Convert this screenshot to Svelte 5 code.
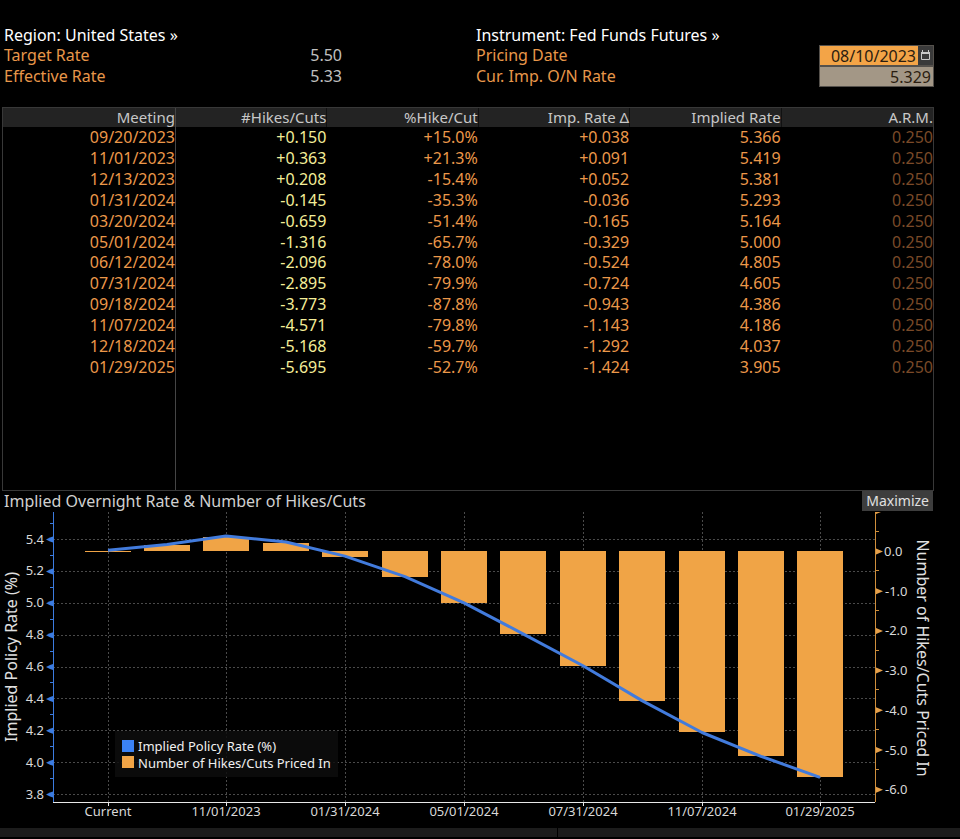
<script>
  const columns = ['Meeting', '#Hikes/Cuts', '%Hike/Cut', 'Imp. Rate Δ', 'Implied Rate', 'A.R.M.'];

  const meetings = [
    ['09/20/2023', '+0.150', '+15.0%', '+0.038', '5.366', '0.250'],
    ['11/01/2023', '+0.363', '+21.3%', '+0.091', '5.419', '0.250'],
    ['12/13/2023', '+0.208', '-15.4%', '+0.052', '5.381', '0.250'],
    ['01/31/2024', '-0.145', '-35.3%', '-0.036', '5.293', '0.250'],
    ['03/20/2024', '-0.659', '-51.4%', '-0.165', '5.164', '0.250'],
    ['05/01/2024', '-1.316', '-65.7%', '-0.329', '5.000', '0.250'],
    ['06/12/2024', '-2.096', '-78.0%', '-0.524', '4.805', '0.250'],
    ['07/31/2024', '-2.895', '-79.9%', '-0.724', '4.605', '0.250'],
    ['09/18/2024', '-3.773', '-87.8%', '-0.943', '4.386', '0.250'],
    ['11/07/2024', '-4.571', '-79.8%', '-1.143', '4.186', '0.250'],
    ['12/18/2024', '-5.168', '-59.7%', '-1.292', '4.037', '0.250'],
    ['01/29/2025', '-5.695', '-52.7%', '-1.424', '3.905', '0.250']
  ];

  // Chart scales, in viewBox units.
  const plot = { left: 53, right: 875, top: 1, bottom: 291 };
  const barWidth = 46;
  const x = (i) => Math.floor(108 + i * 59.4);
  const yRate = (rate) => 28.5 + (5.4 - rate) * 159.4;
  const yCuts = (cuts) => 40 - cuts * 39.7;

  const points = [
    { label: 'Current', cuts: 0, rate: 5.33 },
    ...meetings.map((m) => ({ label: m[0], cuts: Number(m[1]), rate: Number(m[4]) }))
  ];
  const bars = points.map((p, i) => {
    const y = Math.round(yCuts(Math.max(p.cuts, 0)));
    const end = Math.round(yCuts(Math.min(p.cuts, 0)));
    return { x: x(i) - barWidth / 2, y, height: Math.max(end - y, 1) };
  });
  const line = points.map((p, i) => `${x(i)},${(yRate(p.rate) - 0.5).toFixed(1)}`).join(' ');

  const rateTicks = [5.4, 5.2, 5.0, 4.8, 4.6, 4.4, 4.2, 4.0, 3.8];
  const rateMinor = [5.5, 5.3, 5.1, 4.9, 4.7, 4.5, 4.3, 4.1, 3.9];
  const cutTicks = [0, -1, -2, -3, -4, -5, -6];
  const cutMinor = [0.5, -0.5, -1.5, -2.5, -3.5, -4.5, -5.5];
  const dates = points.map((p, i) => ({ label: p.label, x: x(i) })).filter((_, i) => i % 2 === 0);

  let pricingDate = $state('08/10/2023');
</script>

<main>
  <header>
    <section>
      <button class="picker" type="button">Region: United States »</button>
      <dl>
        <dt>Target Rate</dt>
        <dd>5.50</dd>
        <dt>Effective Rate</dt>
        <dd>5.33</dd>
      </dl>
    </section>
    <section>
      <button class="picker" type="button">Instrument: Fed Funds Futures »</button>
      <div class="field">
        <label for="pricing-date">Pricing Date</label>
        <div class="box date">
          <input id="pricing-date" type="text" bind:value={pricingDate} />
          <button type="button" aria-label="Open calendar">
            <svg width="11" height="12" viewBox="0 0 11 12" aria-hidden="true">
              <path d="M1.5 3.5H9.5V10.5H1.5Z" fill="none" stroke="#c8c8c8" />
              <path d="M1 3H10V5H1Z M2 1H3V3H2Z M8 1H9V3H8Z" fill="#c8c8c8" />
            </svg>
          </button>
        </div>
      </div>
      <div class="field">
        <label for="current-rate">Cur. Imp. O/N Rate</label>
        <div class="box rate">
          <input id="current-rate" type="text" value="5.329" readonly />
        </div>
      </div>
    </section>
  </header>

  <div class="panel">
    <table>
      <thead>
        <tr>
          {#each columns as column}
            <th scope="col">{column}</th>
          {/each}
        </tr>
      </thead>
      <tbody>
        {#each meetings as row}
          <tr>
            {#each row as cell}
              <td>{cell}</td>
            {/each}
          </tr>
        {/each}
      </tbody>
    </table>
    <div class="blank"></div>
  </div>

  <div class="title">
    <h2>Implied Overnight Rate &amp; Number of Hikes/Cuts</h2>
    <button type="button">Maximize</button>
  </div>

  <svg class="chart" viewBox="0 0 960 317" role="img" aria-label="Implied policy rate and number of hikes or cuts priced in">
    <g class="grid">
      {#each rateTicks as t}
        <line x1={plot.left} x2={plot.right} y1={Math.floor(yRate(t)) + 0.5} y2={Math.floor(yRate(t)) + 0.5} />
      {/each}
      {#each dates as d}
        <line x1={d.x + 0.5} x2={d.x + 0.5} y1={plot.top} y2={plot.bottom} />
      {/each}
    </g>

    <g fill="#f0a446">
      {#each bars as b}
        <rect x={b.x} y={b.y} width={barWidth} height={b.height} />
      {/each}
    </g>
    <polyline points={line} fill="none" stroke="#427bdc" stroke-width="3" stroke-linejoin="round" />

    <g stroke="#3b7be0" fill="#3b7be0">
      <line x1="53.5" x2="53.5" y1={plot.top} y2={plot.bottom} />
      {#each rateMinor as t}
        <line x1="50" x2="53" y1={Math.floor(yRate(t)) + 0.5} y2={Math.floor(yRate(t)) + 0.5} />
      {/each}
      {#each rateTicks as t}
        <path stroke="none" d="M46 {yRate(t)}L50 {yRate(t) - 2}L53 {yRate(t) - 3}V{yRate(t) + 3}L50 {yRate(t) + 2}Z" />
      {/each}
    </g>
    <g stroke="#d08f3c" fill="#e6a04a">
      <line x1="875.5" x2="875.5" y1={plot.top} y2={plot.bottom} />
      <path stroke="none" d="M875 1H881L876 3Z" />
      {#each cutMinor as t}
        <line x1="876" x2="879" y1={Math.floor(yCuts(t)) + 0.5} y2={Math.floor(yCuts(t)) + 0.5} />
      {/each}
      {#each cutTicks as t}
        <path stroke="none" d="M883 {yCuts(t) + 0.5}L876 {yCuts(t) - 2.5}V{yCuts(t) + 3.5}Z" />
      {/each}
    </g>
    <g stroke="#e8e8e8">
      <line x1={plot.left} x2={plot.right} y1="291.5" y2="291.5" />
      {#each dates as d}
        <line x1={d.x + 0.5} x2={d.x + 0.5} y1="291" y2="295" />
      {/each}
    </g>

    <g class="labels">
      {#each rateTicks as t}
        <text x="44" y={Math.round(yRate(t)) + 4} text-anchor="end">{t.toFixed(1)}</text>
      {/each}
      {#each cutTicks as t}
        <text x={t === 0 ? 884 : 885} y={Math.round(yCuts(t)) + 5}>{t.toFixed(1)}</text>
      {/each}
      {#each dates as d}
        <text x={d.x} y="305" text-anchor="middle">{d.label}</text>
      {/each}
    </g>
    <text class="axis" transform="translate(17 146) rotate(-90)" text-anchor="middle">Implied Policy Rate (%)</text>
    <text class="axis" transform="translate(917 147) rotate(90)" text-anchor="middle">Number of Hikes/Cuts Priced In</text>

    <rect x="115" y="220" width="223" height="46" fill="#0d0d0d" fill-opacity="0.85" />
    <rect x="122" y="229" width="12" height="12" fill="#3b82f5" />
    <rect x="122" y="245" width="12" height="12" fill="#f0a446" />
    <g class="legend">
      <text x="138" y="240">Implied Policy Rate (%)</text>
      <text x="138" y="257">Number of Hikes/Cuts Priced In</text>
    </g>
  </svg>

  <footer><span></span><span></span></footer>
</main>

<style>
  :global(body) {
    margin: 0;
    background: #000;
  }

  main {
    font: 16px/20px 'Noto Sans', 'Open Sans', sans-serif;
    color: #d0d0d0;
    padding-top: 25px;
  }

  button,
  input {
    font: inherit;
    color: inherit;
    border: 0;
    margin: 0;
    padding: 0;
    background: none;
    border-radius: 0;
  }

  button {
    cursor: pointer;
  }

  header {
    display: grid;
    grid-template-columns: 472fr 458fr;
    padding: 0 26px 20px 4px;
  }

  .picker {
    display: block;
    color: #fff;
  }

  dl {
    display: grid;
    grid-template-columns: 1fr 1fr;
    grid-auto-rows: 21px;
    width: 338px;
    max-width: 90%;
    margin: 0;
  }

  dt,
  label {
    color: #e8974a;
  }

  dd {
    margin: 0;
    text-align: right;
    color: #c0c0c0;
  }

  .field {
    display: flex;
    justify-content: space-between;
    height: 21px;
  }

  .box {
    box-sizing: border-box;
    display: flex;
    width: 115px;
    height: 21px;
    border: 1px solid #55514c;
    color: #2b1d10;
  }

  .box input {
    flex: 1;
    min-width: 0;
    height: 19px;
    line-height: 18px;
    text-align: right;
    padding-right: 2px;
  }

  .date input {
    background: #f3a447;
  }

  .date button {
    width: 15px;
    display: flex;
    align-items: center;
    justify-content: center;
    padding-bottom: 2px;
    background: #3a3a3a;
  }

  .rate input {
    background: #a39786;
  }

  .panel {
    display: flex;
    flex-direction: column;
    min-height: 382px;
    margin: 0 26px 0 2px;
    border: 1px solid #383838;
  }

  table {
    width: 100%;
    height: 269px;
    table-layout: fixed;
    border-collapse: separate;
    border-spacing: 0;
  }

  th,
  td {
    padding: 0;
    text-align: right;
    font-weight: 400;
    color: #ec984a;
  }

  th {
    background: #232323;
    color: #c8c8c8;
    font-size: 15px;
    line-height: 19px;
    border-right: 1px solid #111;
  }

  td {
    border-right: 1px solid transparent;
  }

  th:first-child,
  td:first-child {
    width: 18.6%;
    box-sizing: border-box;
    border-right-color: #454545;
  }

  th:last-child,
  td:last-child {
    border-right: 0;
  }

  td:nth-child(2) {
    color: #f4ee98;
  }

  td:last-child {
    color: #7a4a28;
  }

  .blank {
    flex: 1;
    width: 18.6%;
    box-sizing: border-box;
    border-right: 1px solid #454545;
  }

  .title {
    display: flex;
    justify-content: space-between;
    padding: 0 27px 0 4px;
  }

  h2 {
    margin: 0;
    font-size: 16px;
    font-weight: 400;
  }

  .title button {
    background: #3d3d3d;
    padding: 0 4px;
    color: #e0e0e0;
    font-size: 14px;
  }

  .chart {
    display: block;
    width: 100%;
    height: auto;
  }

  .grid line {
    stroke: #4a4a4a;
    stroke-dasharray: 2 2;
  }

  .labels,
  .legend {
    font-size: 13px;
    fill: #d8d8d8;
  }

  .legend {
    fill: #f0f0f0;
  }

  .axis {
    font-size: 16px;
    fill: #e0e0e0;
  }

  footer {
    display: grid;
    grid-template-columns: 557fr 402fr;
    gap: 1px;
    height: 9px;
  }

  footer span {
    background: #1c1c1c;
  }
</style>
